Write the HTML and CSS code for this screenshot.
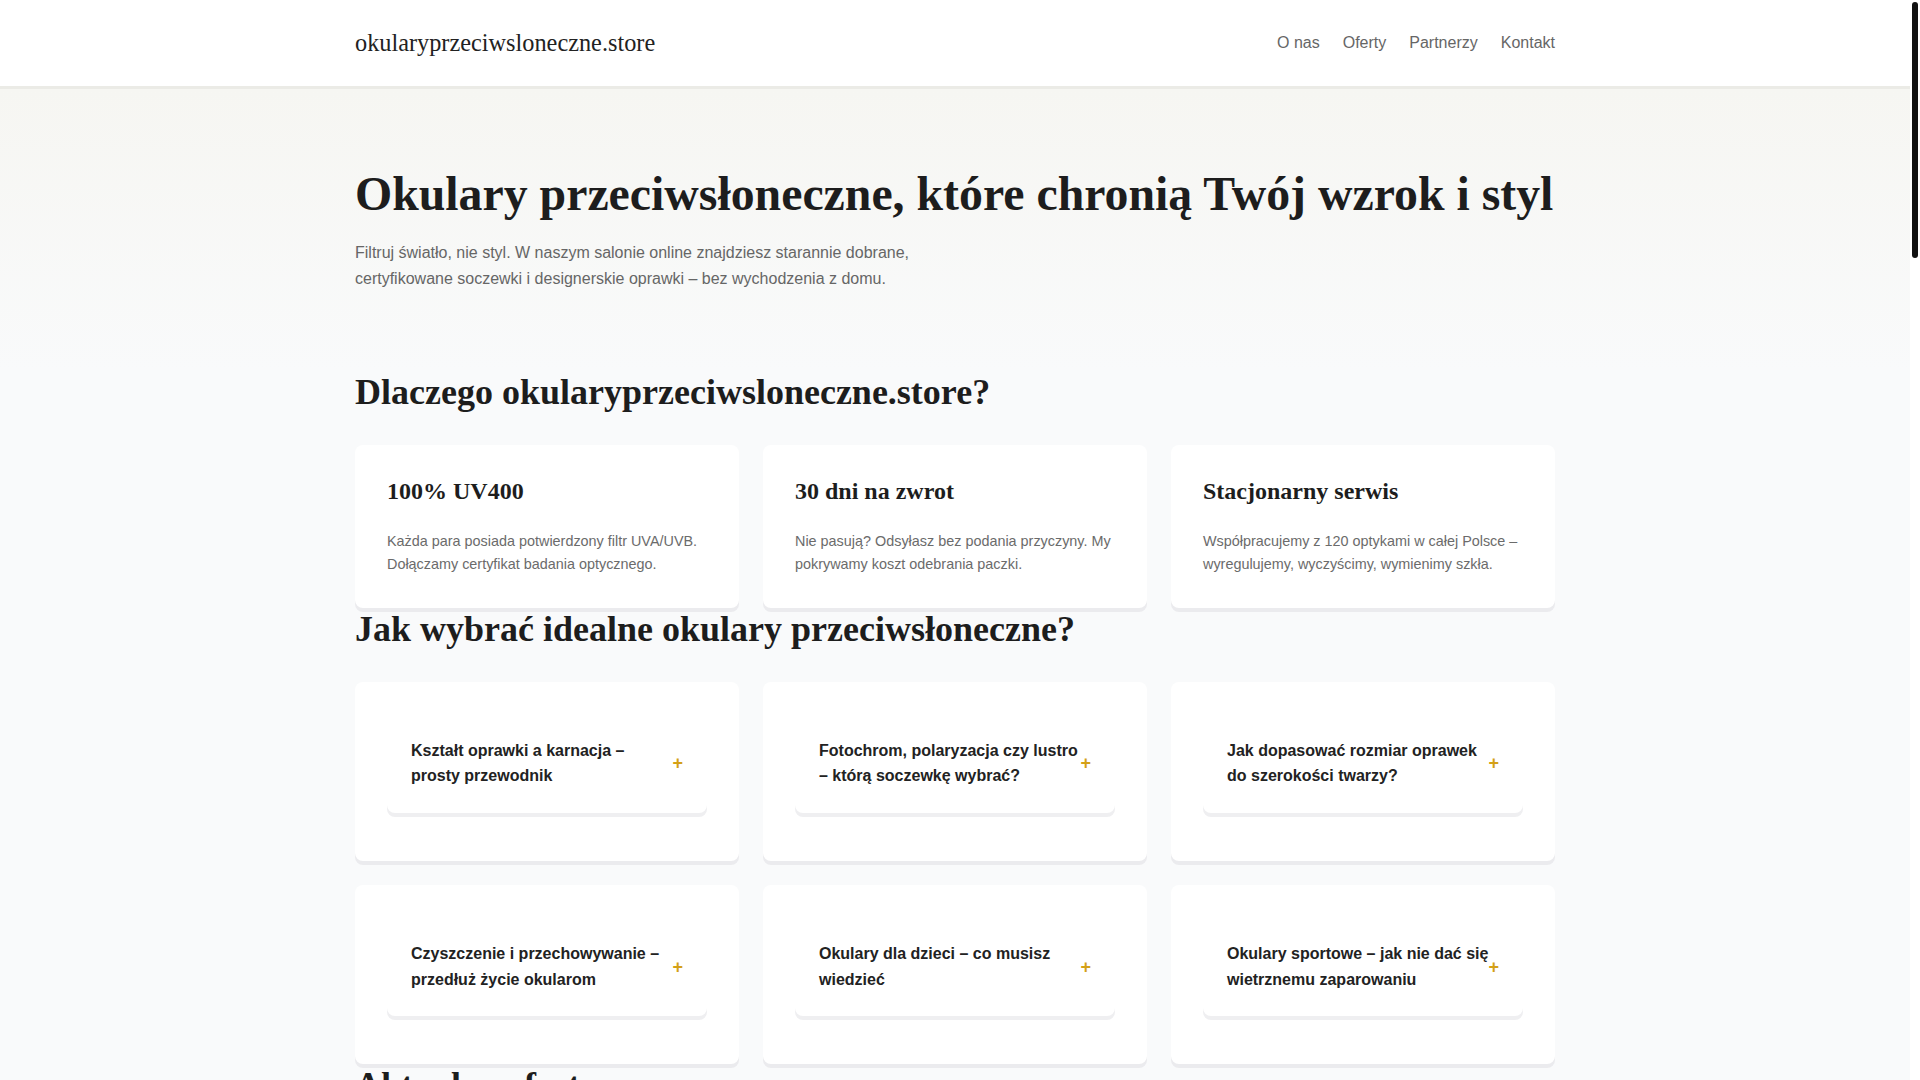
FILE: index.html
```html
<!DOCTYPE html>
<html lang="pl">
<head>
<meta charset="utf-8">
<title>okularyprzeciwsloneczne.store</title>
<link rel="stylesheet" href="styles.css">
</head>
<body>
<div class="page">
<header class="site-header">
  <div class="container header-inner">
    <a class="logo" href="#">okularyprzeciwsloneczne.store</a>
    <nav class="nav">
      <a href="#">O nas</a>
      <a href="#">Oferty</a>
      <a href="#">Partnerzy</a>
      <a href="#">Kontakt</a>
    </nav>
  </div>
</header>

<main>
  <section class="hero">
    <div class="container">
      <h1 class="hero-title">Okulary przeciwsłoneczne, które chronią Twój wzrok i styl</h1>
      <p class="hero-lead">Filtruj światło, nie styl. W naszym salonie online znajdziesz starannie dobrane, certyfikowane soczewki i designerskie oprawki – bez wychodzenia z domu.</p>
    </div>
  </section>

  <section class="section">
    <div class="container">
      <h2 class="section-title">Dlaczego okularyprzeciwsloneczne.store?</h2>
      <div class="grid">
        <div class="card">
          <h3 class="card-title">100% UV400</h3>
          <p class="card-text">Każda para posiada potwierdzony filtr UVA/UVB. Dołączamy certyfikat badania optycznego.</p>
        </div>
        <div class="card">
          <h3 class="card-title">30 dni na zwrot</h3>
          <p class="card-text">Nie pasują? Odsyłasz bez podania przyczyny. My pokrywamy koszt odebrania paczki.</p>
        </div>
        <div class="card">
          <h3 class="card-title">Stacjonarny serwis</h3>
          <p class="card-text">Współpracujemy z 120 optykami w całej Polsce – wyregulujemy, wyczyścimy, wymienimy szkła.</p>
        </div>
      </div>
    </div>
  </section>

  <section class="section">
    <div class="container">
      <h2 class="section-title">Jak wybrać idealne okulary przeciwsłoneczne?</h2>
      <div class="grid">
        <div class="faq">
          <div class="faq-q"><span class="faq-text">Kształt oprawki a karnacja – prosty przewodnik</span><span class="faq-plus">+</span></div>
        </div>
        <div class="faq">
          <div class="faq-q"><span class="faq-text">Fotochrom, polaryzacja czy lustro – którą soczewkę wybrać?</span><span class="faq-plus">+</span></div>
        </div>
        <div class="faq">
          <div class="faq-q"><span class="faq-text">Jak dopasować rozmiar oprawek do szerokości twarzy?</span><span class="faq-plus">+</span></div>
        </div>
        <div class="faq">
          <div class="faq-q"><span class="faq-text">Czyszczenie i przechowywanie – przedłuż życie okularom</span><span class="faq-plus">+</span></div>
        </div>
        <div class="faq">
          <div class="faq-q"><span class="faq-text">Okulary dla dzieci – co musisz wiedzieć</span><span class="faq-plus">+</span></div>
        </div>
        <div class="faq">
          <div class="faq-q"><span class="faq-text">Okulary sportowe – jak nie dać się wietrznemu zaparowaniu</span><span class="faq-plus">+</span></div>
        </div>
      </div>
    </div>
  </section>

  <section class="section">
    <div class="container">
      <h2 class="section-title">Aktualne oferty</h2>
      <div class="grid">
        <div class="card tall"><h3 class="card-title">Aviator Classic</h3><p class="card-text">Metalowa oprawka, soczewki polaryzacyjne, filtr UV400. Idealne na co dzień i za kierownicą.</p><p class="price">349 zł</p></div>
        <div class="card tall"><h3 class="card-title">Wayfarer Urban</h3><p class="card-text">Lekka oprawka z acetatu, soczewki gradientowe. Ponadczasowy kształt pasujący do większości twarzy.</p><p class="price">299 zł</p></div>
        <div class="card tall"><h3 class="card-title">Sport Shield</h3><p class="card-text">Panoramiczna soczewka, wentylowane zauszniki, antyparowa powłoka. Dla biegaczy i rowerzystów.</p><p class="price">259 zł</p></div>
      </div>
    </div>
  </section>
</main>
</div>
<div class="scrollbar" aria-hidden="true"><div class="scrollbar-thumb"></div></div>
</body>
</html>
```

FILE: styles.css
```css
html,
body {
  height: 100%;
  margin: 0;
  overflow: hidden;
  background: #f9fafb;
}
body {
  display: flex;
  font-family: "Liberation Sans", Arial, sans-serif;
  color: #222;
}
.page {
  flex: 1;
  min-width: 0;
  height: 100vh;
  overflow: hidden;
  background: #f9fafb;
}
.scrollbar {
  flex: none;
  width: 10px;
  height: 100vh;
  background: #fff;
  padding: 2px;
  box-sizing: border-box;
}
.scrollbar-thumb {
  height: 256px;
  background: #111;
  border-radius: 4px;
}
a {
  text-decoration: none;
}
.container {
  width: 1200px;
  margin: 0 auto;
}
.site-header {
  background: #fff;
  border-bottom: 3px solid #ebebe6;
}
.header-inner {
  height: 86px;
  display: flex;
  align-items: center;
  justify-content: space-between;
}
.logo {
  font-family: "Liberation Serif", "Times New Roman", serif;
  font-size: 24.3px;
  color: #222;
}
.nav {
  display: flex;
  gap: 23px;
}
.nav a {
  font-size: 16px;
  color: #666;
}
.hero {
  background: linear-gradient(180deg, #f6f6f2 0%, #f9fafb 100%);
  padding: 76px 0 79px;
}
.hero-title {
  font-family: "Liberation Serif", "Times New Roman", serif;
  font-weight: 700;
  font-size: 47.8px;
  line-height: 1.2;
  margin: 0 0 18px;
  color: #1d1d1d;
  white-space: nowrap;
}
.hero-lead {
  max-width: 600px;
  margin: 0;
  font-size: 16px;
  line-height: 1.6;
  color: #666;
}
.section-title {
  font-family: "Liberation Serif", "Times New Roman", serif;
  font-weight: 700;
  font-size: 36px;
  line-height: 1.2;
  margin: 0 0 31px;
  color: #1d1d1d;
}
.grid {
  display: grid;
  grid-template-columns: repeat(3, 1fr);
  gap: 24px;
}
.card {
  background: #fff;
  border-radius: 8px;
  box-shadow: 0 4px 0 #ebebee;
  padding: 32px;
}
.card-title {
  font-family: "Liberation Serif", "Times New Roman", serif;
  font-weight: 700;
  font-size: 24px;
  line-height: 1.2;
  margin: 0 0 24px;
  color: #1d1d1d;
}
.card-text {
  margin: 0;
  font-size: 14.4px;
  line-height: 1.6;
  color: #6b6b6b;
}
.card.tall {
  min-height: 300px;
}
.price {
  margin: 24px 0 0;
  font-size: 20px;
  font-weight: 700;
  color: #d4a21a;
}
.faq {
  background: #fff;
  border-radius: 8px;
  box-shadow: 0 4px 0 #ebebee;
  padding: 32px;
}
.faq-q {
  display: flex;
  align-items: center;
  padding: 24px;
  margin-bottom: 16px;
  border-radius: 8px;
  background: #fff;
  box-shadow: 0 4px 0 #efeff1;
  font-size: 16px;
  font-weight: 700;
  line-height: 1.6;
  color: #222;
}
.faq-text {
  flex: 1;
}
.faq-plus {
  flex: none;
  margin-left: -2.5px;
  color: #d4a017;
  font-size: 18px;
  font-weight: 700;
  line-height: 1;
}
```
